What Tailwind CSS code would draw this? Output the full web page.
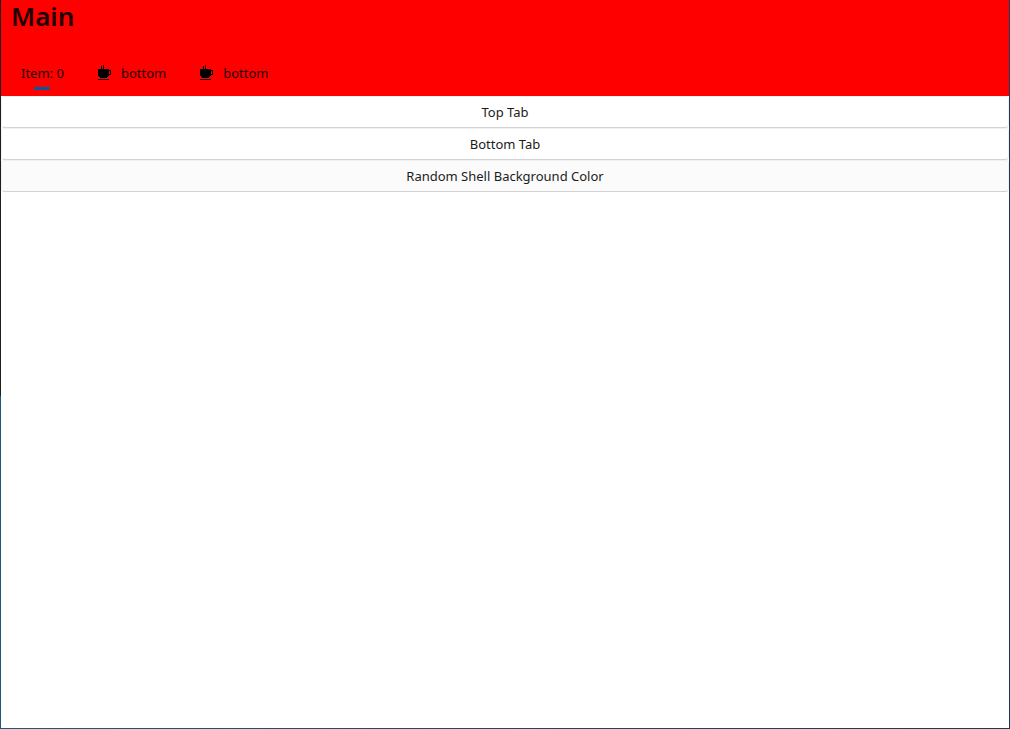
<!DOCTYPE html>
<html lang="en">
<head>
<meta charset="utf-8">
<title>Main</title>
<script src="https://cdn.jsdelivr.net/npm/@tailwindcss/browser@4"></script>
</head>
<body class="flex min-h-screen flex-col bg-white font-['Noto_Sans',sans-serif] text-[13px] leading-5 text-[#1b1b1b]">
<div class="flex grow">
  <div class="flex w-px shrink-0 flex-col">
    <div class="h-[396px] bg-[#1e1e1e]"></div>
    <div class="grow bg-[#1b5a78]"></div>
  </div>
  <div class="min-w-0 grow">
    <header class="flex h-24 flex-col justify-between bg-[#ff0000] text-[#240000]">
      <h1 class="px-[10px] text-[26px] leading-8 font-semibold">Main</h1>
      <nav class="flex h-[46px] gap-[10px] px-2">
        <button type="button" class="flex flex-col items-center px-3 pt-[13px]">
          <span>Item: 0</span>
          <span class="mt-1 h-[3px] w-4 rounded-full bg-[#005a9e]"></span>
        </button>
        <button type="button" class="flex items-start gap-[9px] px-3 pt-[13px]">
          <svg class="mt-px h-4 w-[14px] shrink-0" viewBox="1 0 14 16" fill="#000" shape-rendering="crispEdges" aria-hidden="true"><path d="M4 2h1v3H4zM6 1h1v4H6zM1 5h11v1h2v5h-2v1h-1v1h-1v1H3v-1H2v-1H1zM12 7v3h1V7zM1 15h11v1H1z" fill-rule="evenodd"/></svg>
          <span>bottom</span>
        </button>
        <button type="button" class="flex items-start gap-[9px] px-3 pt-[13px]">
          <svg class="mt-px h-4 w-[14px] shrink-0" viewBox="1 0 14 16" fill="#000" shape-rendering="crispEdges" aria-hidden="true"><path d="M4 2h1v3H4zM6 1h1v4H6zM1 5h11v1h2v5h-2v1h-1v1h-1v1H3v-1H2v-1H1zM12 7v3h1V7zM1 15h11v1H1z" fill-rule="evenodd"/></svg>
          <span>bottom</span>
        </button>
      </nav>
    </header>
    <main class="flex flex-col">
      <button type="button" class="h-8 rounded border border-[#f0f0f0] border-b-[#d2d2d2] bg-white">Top Tab</button>
      <button type="button" class="h-8 rounded border border-[#f0f0f0] border-b-[#d2d2d2] bg-white">Bottom Tab</button>
      <button type="button" class="h-8 rounded border border-[#f0f0f0] border-b-[#d2d2d2] bg-[#fbfbfb]">Random Shell Background Color</button>
    </main>
  </div>
  <div class="w-px shrink-0 bg-[#1e3755]"></div>
</div>
<div class="h-px bg-linear-to-r from-[#1b5a78] to-[#1e3755]"></div>
</body>
</html>
